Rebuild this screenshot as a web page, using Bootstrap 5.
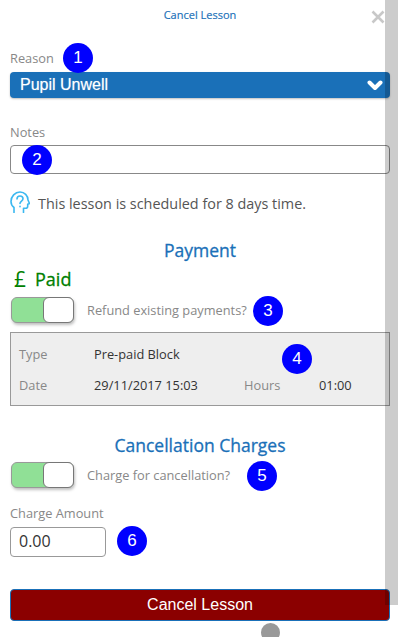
<!DOCTYPE html>
<html lang="en">
<head>
<meta charset="utf-8">
<title>Cancel Lesson</title>
<link href="https://cdn.jsdelivr.net/npm/bootstrap@5.3.0/dist/css/bootstrap.min.css" rel="stylesheet">
<style>
html,body{height:637px;overflow:hidden;background:#fff}
body{font-family:"Open Sans",sans-serif;font-size:12.8px;color:#888;position:relative}
.sheet{padding:0 10px;width:400px}
.top-title{height:30px;line-height:30px;font-size:11px;color:#1a70b8;text-align:center;margin:0;-webkit-text-stroke:.15px #1a70b8}
.close-x{position:absolute;left:371px;top:10px;width:14px;height:14px}
.lbl{display:block;font-size:12.8px;line-height:16px;color:#888;margin:0}
.lbl-reason{margin-top:20px;margin-bottom:6px}
.pick.form-select{height:26px;width:380px;padding:0 10px;border:0;border-radius:4px;background-color:#1a70b8;color:#fff;font:400 16px/26px "Liberation Sans",sans-serif;text-shadow:0 0 1px rgba(255,255,255,.5);background-position:right 7px center;background-size:16px 11px;box-shadow:0 1px 2px rgba(0,0,0,.25);
background-image:url("data:image/svg+xml,%3Csvg xmlns='http://www.w3.org/2000/svg' viewBox='0 0 16 11'%3E%3Cpath d='M2.500 2.500L8 8l5.500-5.500' fill='none' stroke='%23fff' stroke-width='4' stroke-linecap='round' stroke-linejoin='round'/%3E%3C/svg%3E")}
.lbl-notes{margin-top:25px;margin-bottom:6px;position:relative;top:1px}
.notes.form-control{height:29px;border:1px solid #888;border-radius:4px;padding:0 8px;width:380px}
.info{margin-top:17px;height:22px;font-size:14.4px;color:#555;gap:8px}
.info svg{width:20px;height:22px;flex:none}
.info span{padding-top:3px}
.sect{font-size:17.500px;line-height:22px;font-weight:400;color:#1a70b8;text-align:center;margin:0;-webkit-text-stroke:.3px #1a70b8}
.pay-head{margin-top:26px}
.paid{color:#008000;font-size:18px;line-height:22px;margin-top:7px;gap:9px;padding-left:4px;font-weight:400;-webkit-text-stroke:.3px #008000}
.paid .pound{font-size:21px;line-height:22px;-webkit-text-stroke:0}
.toggler{width:63px;height:26px;margin-left:1px;background:#90e096;border:1px solid #999;border-radius:6px;box-shadow:1px 2px 3px rgba(0,0,0,.25);flex:none;justify-content:flex-end}
.toggler i{display:block;width:31px;height:26px;margin:-1px;background:#fff;border:1px solid #777;border-radius:6px}
.tog-row{gap:13px;font-size:12.8px;color:#888}
.tog-row span{padding-top:2px}
.tog-a{margin-top:7px}
.detail{margin-top:9px;height:74px;width:380px;background:#eee;border:1px solid #999;padding:12px 8px;display:grid;grid-template-columns:75px 150px 75px 1fr;grid-auto-rows:31px;font-size:12.8px;line-height:19px;color:#888}
.detail b{font-weight:400;color:#333}
.cc-head{margin-top:28px}
.tog-b{margin-top:6px}
.lbl-charge{margin-top:17px;margin-bottom:6px}
.amount.form-control{width:96px;height:30px;border:1px solid #999;border-radius:4px;padding:0 8px 2px;font:400 16px "Open Sans",sans-serif;color:#333}
.go.btn{display:block;margin-top:32px;width:380px;height:32px;padding:0;background:#8b0000;border:1px solid #1a70b8;border-radius:4px;color:#fff;font:400 16px/30px "Liberation Sans",sans-serif}
.track{position:absolute;left:385px;top:0;width:13px;height:605px;background:rgba(0,0,0,.2)}
.pin{position:absolute;width:30px;height:30px;border-radius:50%;background:#00f;color:#fff;font:400 17px/30px "Liberation Sans",sans-serif;text-align:center}
.dot{position:absolute;left:261px;top:623px;width:19px;height:19px;border-radius:50%;background:#999}
</style>
</head>
<body>
<div class="sheet">
  <h1 class="top-title">Cancel Lesson</h1>
  <label class="lbl lbl-reason" for="r">Reason</label>
  <select id="r" class="form-select pick"><option>Pupil Unwell</option></select>
  <label class="lbl lbl-notes" for="n">Notes</label>
  <input id="n" class="form-control notes" type="text">
  <div class="info d-flex align-items-center">
    <svg viewBox="0 0 20 22" fill="none" stroke="#3bb8f0" stroke-width="1.600" stroke-linecap="round" stroke-linejoin="round"><path d="M4 21.500v-5C2 15 1 12.800 1 10.500 1 5.500 5 1 10 1c4.500 0 8 3.500 8 8l1.500 3.500-1.800.8v2c0 1.200-.9 2-2 2h-2.200v4.200"/><path d="M7 8c0-1.700 1.300-3 3-3s3 1.200 3 2.800c0 2.200-3 2.400-3 4.700"/><path d="M10 15.300v.4"/></svg>
    <span>This lesson is scheduled for 8 days time.</span>
  </div>
  <h2 class="sect pay-head">Payment</h2>
  <div class="paid d-flex align-items-center"><span class="pound">£</span><span>Paid</span></div>
  <div class="tog-row tog-a d-flex align-items-center"><div class="toggler d-flex"><i></i></div><span>Refund existing payments?</span></div>
  <div class="detail">
    <span>Type</span><b>Pre-paid Block</b><span></span><span></span>
    <span>Date</span><b>29/11/2017 15:03</b><span>Hours</span><b>01:00</b>
  </div>
  <h2 class="sect cc-head">Cancellation Charges</h2>
  <div class="tog-row tog-b d-flex align-items-center"><div class="toggler d-flex"><i></i></div><span>Charge for cancellation?</span></div>
  <label class="lbl lbl-charge" for="a">Charge Amount</label>
  <input id="a" class="form-control amount" type="text" value="0.00">
  <button class="btn go" type="button">Cancel Lesson</button>
</div>
<div class="track"></div>
<svg class="close-x" viewBox="0 0 14 14"><path d="M1.500 1.500l11 11M12.500 1.500l-11 11" stroke="#c8c8c8" stroke-width="2.600"/></svg>
<div class="pin" style="left:63px;top:43px">1</div>
<div class="pin" style="left:22px;top:145px">2</div>
<div class="pin" style="left:253px;top:296px">3</div>
<div class="pin" style="left:282px;top:344px">4</div>
<div class="pin" style="left:247px;top:461px">5</div>
<div class="pin" style="left:117px;top:526px">6</div>
<div class="dot"></div>
<script src="https://cdn.jsdelivr.net/npm/bootstrap@5.3.0/dist/js/bootstrap.bundle.min.js"></script>
</body>
</html>
